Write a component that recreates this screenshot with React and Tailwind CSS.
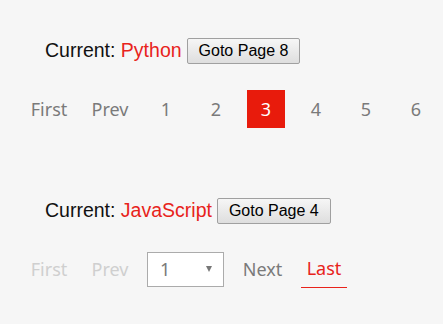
import { useState } from 'react';

const itemFont = { fontFamily: '"Noto Sans", "Liberation Sans", sans-serif' };

function CurrentLine({ lang, page, onGoto }) {
  return (
    <div className="flex items-center h-[26px] pl-[45px] text-[19.5px] text-[#111] font-['Liberation_Sans',Arial,sans-serif]">
      <span>Current:&nbsp;</span>
      <span className="text-[#e8231b]">{lang}</span>
      <button
        onClick={onGoto}
        className="ml-[5px] h-[26px] px-[11px] text-[16px] text-black border border-[#a0a0a0] rounded-[2px] bg-gradient-to-b from-[#f6f6f6] to-[#dedede]"
      >
        Goto Page {page}
      </button>
    </div>
  );
}

export default function App() {
  const [page, setPage] = useState(3);
  const pages = [1, 2, 3, 4, 5, 6];

  return (
    <div className="min-h-screen bg-[#f6f6f6] pt-[38px] overflow-hidden">
      <CurrentLine lang="Python" page={8} onGoto={() => setPage(8)} />

      <ul className="mt-[26px] flex gap-[12px] pl-[25px] text-[18px] text-[#7a7a7a] whitespace-nowrap" style={itemFont}>
        <li className="w-[48px] h-[38px] flex items-center justify-center">First</li>
        <li className="w-[50px] h-[38px] flex items-center justify-center">Prev</li>
        {pages.map((p) => (
          <li
            key={p}
            onClick={() => setPage(p)}
            className={
              p === page
                ? 'w-[38px] h-[38px] flex items-center justify-center bg-[#e81b0c] text-white'
                : 'w-[38px] h-[38px] flex items-center justify-center'
            }
          >
            {p}
          </li>
        ))}
      </ul>

      <div className="mt-[70px]">
        <CurrentLine lang="JavaScript" page={4} onGoto={() => {}} />
      </div>

      <ul className="mt-[26px] flex items-center gap-[12px] pl-[25px] text-[18px] text-[#7a7a7a] whitespace-nowrap" style={itemFont}>
        <li className="w-[48px] h-[38px] flex items-center justify-center text-[#cfcfcf]">First</li>
        <li className="w-[50px] h-[38px] flex items-center justify-center text-[#cfcfcf]">Prev</li>
        <li className="w-[77px] h-[35px] flex items-center justify-between pl-[12px] pr-[11px] bg-white border border-[#ababab]">
          <span>1</span>
          <span className="w-0 h-0 border-l-[3px] border-r-[3px] border-t-[6px] border-l-transparent border-r-transparent border-t-[#777]" />
        </li>
        <li className="w-[53px] h-[38px] flex items-center justify-center">Next</li>
        <li className="w-[46px] h-[38px] flex items-center justify-center text-[#e8231b] border-b-[1.5px] border-[#e8231b]">Last</li>
      </ul>
    </div>
  );
}
